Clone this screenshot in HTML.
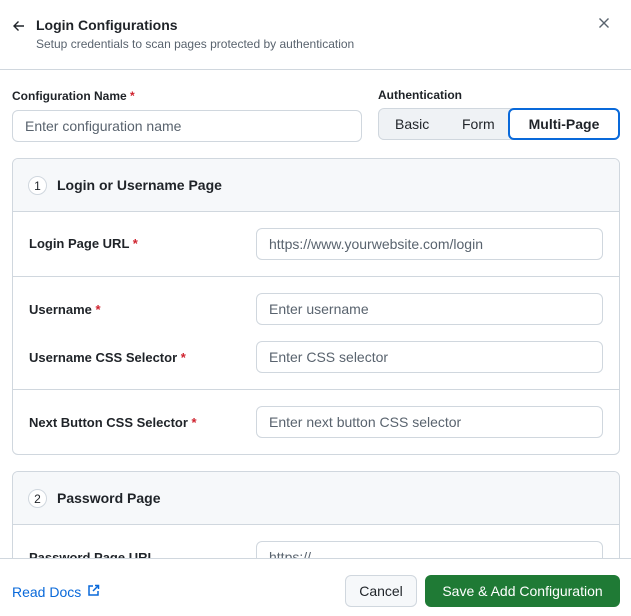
<!DOCTYPE html>
<html><head><style>
*{box-sizing:border-box;margin:0;padding:0}
body{width:631px;height:616px;overflow:hidden;background:#fff;font-family:"Liberation Sans",sans-serif;color:#1f2328;position:relative}
.a{position:absolute}
.lbl{font-size:13px;font-weight:bold;color:#1f2328}
.req{color:#cf222e}
.inp{position:absolute;border:1px solid #d0d7de;border-radius:6px;background:#fff;font-size:14px;color:#59636e;padding-left:12px;display:flex;align-items:center}
.card{position:absolute;left:12px;width:608px;border:1px solid #d0d7de;border-radius:6px;overflow:hidden}
.ch{background:#f6f8fa;height:53px;border-bottom:1px solid #d0d7de;position:relative}
.num{position:absolute;left:15px;top:17px;width:19px;height:19px;border:1px solid #d0d7de;border-radius:50%;font-size:12px;display:flex;align-items:center;justify-content:center;background:#fff}
.ct{position:absolute;left:44px;top:18px;font-size:14px;font-weight:bold}
.hr{position:absolute;left:0;right:0;height:1px;background:#d0d7de}
</style></head><body>
<svg class="a" style="left:12px;top:19px" width="14" height="14" viewBox="0 0 14 14"><path d="M12 7H2M6.5 2.5L2 7l4.5 4.5" stroke="#1f2328" stroke-width="1.4" fill="none"/></svg>
<div class="a" style="left:36px;top:17px;font-size:14px;font-weight:bold">Login Configurations</div>
<div class="a" style="left:36px;top:37px;font-size:12px;color:#59636e">Setup credentials to scan pages protected by authentication</div>
<svg class="a" style="left:598px;top:17px" width="12" height="12" viewBox="0 0 12 12"><path d="M1.5 1.5l9 9M10.5 1.5l-9 9" stroke="#59636e" stroke-width="1.4"/></svg>
<div class="a" style="left:0;top:69px;width:631px;height:1px;background:#d0d7de"></div>
<div class="a lbl" style="left:12px;top:89px;font-size:12px">Configuration Name <span class="req">*</span></div>
<div class="inp" style="left:12px;top:110px;width:350px;height:32px">Enter configuration name</div>
<div class="a lbl" style="left:378px;top:88px;font-size:12px">Authentication</div>
<div class="a" style="left:378px;top:108px;width:242px;height:32px;border:1px solid #d0d7de;border-radius:6px;background:#eff2f5;font-size:14px">
<span class="a" style="left:16px;top:7px">Basic</span>
<span class="a" style="left:83px;top:7px">Form</span>
<div class="a" style="left:129px;top:-1px;width:112px;height:32px;border:2px solid #0969da;border-radius:6px;background:#fff;font-weight:bold;display:flex;align-items:center;justify-content:center">Multi-Page</div>
</div>
<div class="card" style="top:158px;height:297px">
<div class="ch"><div class="num">1</div><div class="ct">Login or Username Page</div></div>
<div class="a lbl" style="left:16px;top:77px">Login Page URL <span class="req">*</span></div>
<div class="inp" style="left:243px;top:69px;width:347px;height:32px">https://www.yourwebsite.com/login</div>
<div class="hr" style="top:117px"></div>
<div class="a lbl" style="left:16px;top:143px">Username <span class="req">*</span></div>
<div class="inp" style="left:243px;top:134px;width:347px;height:32px">Enter username</div>
<div class="a lbl" style="left:16px;top:191px">Username CSS Selector <span class="req">*</span></div>
<div class="inp" style="left:243px;top:182px;width:347px;height:32px">Enter CSS selector</div>
<div class="hr" style="top:230px"></div>
<div class="a lbl" style="left:16px;top:256px">Next Button CSS Selector <span class="req">*</span></div>
<div class="inp" style="left:243px;top:247px;width:347px;height:32px">Enter next button CSS selector</div>
</div>
<div class="card" style="top:471px;height:120px">
<div class="ch"><div class="num">2</div><div class="ct">Password Page</div></div>
<div class="a lbl" style="left:16px;top:78px">Password Page URL</div>
<div class="inp" style="left:243px;top:69px;width:347px;height:32px">https://</div>
</div>
<div class="a" style="left:0;top:558px;width:631px;height:58px;background:#fff;border-top:1px solid #d0d7de"></div>
<div class="a" style="left:12px;top:584px;font-size:14px;color:#0969da">Read Docs</div>
<svg class="a" style="left:87px;top:584px" width="13" height="13" viewBox="0 0 13 13"><path d="M6 2H2v9h9V7M8 1.5h3.5V5M11.5 1.5L6 7" stroke="#0969da" stroke-width="1.5" fill="none"/></svg>
<div class="a" style="left:345px;top:575px;width:72px;height:32px;border:1px solid #d0d7de;border-radius:6px;background:#f6f8fa;font-size:14px;display:flex;align-items:center;justify-content:center">Cancel</div>
<div class="a" style="left:425px;top:575px;width:195px;height:32px;border-radius:6px;background:#1f7a35;color:#fff;font-size:14px;display:flex;align-items:center;justify-content:center">Save &amp; Add Configuration</div>
</body></html>
